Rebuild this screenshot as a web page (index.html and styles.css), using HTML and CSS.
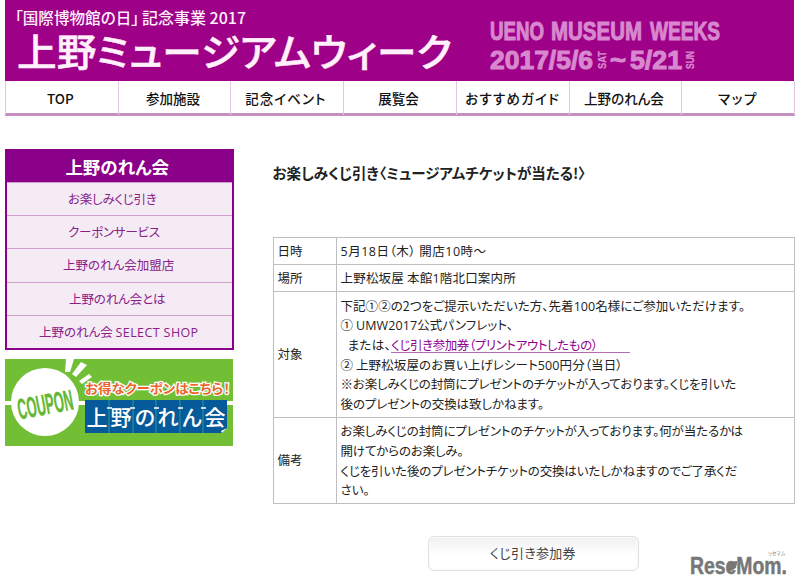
FILE: index.html
```html
<!DOCTYPE html>
<html lang="ja">
<head>
<meta charset="utf-8">
<title>上野ミュージアムウィーク</title>
<link rel="stylesheet" href="styles.css">
</head>
<body>
<header class="hero">
  <svg class="hero-art" viewBox="0 0 789 81" role="img" aria-label="上野ミュージアムウィーク">
    <g class="hero-title">
      <text class="tagline" x="10" y="23.5" textLength="124" lengthAdjust="spacingAndGlyphs">「国際博物館の日」</text>
      <text class="tagline" x="137" y="23.5" textLength="104" lengthAdjust="spacingAndGlyphs">記念事業 2017</text>
      <text class="name" x="12" y="66" textLength="435" lengthAdjust="spacingAndGlyphs">上野ミュージアムウィーク</text>
    </g>
    <g class="hero-en">
      <text x="485" y="40" textLength="54" lengthAdjust="spacingAndGlyphs">UENO</text>
      <text x="546" y="40" textLength="91" lengthAdjust="spacingAndGlyphs">MUSEUM</text>
      <text x="645" y="40" textLength="70" lengthAdjust="spacingAndGlyphs">WEEKS</text>
      <text x="485" y="68.500" textLength="103" lengthAdjust="spacingAndGlyphs">2017/5/6</text>
      <text class="day" transform="translate(601 69) rotate(-90)" textLength="18" lengthAdjust="spacingAndGlyphs">SAT</text>
      <text x="605" y="68.500" textLength="16" lengthAdjust="spacingAndGlyphs">~</text>
      <text x="625" y="68.500" textLength="52" lengthAdjust="spacingAndGlyphs">5/21</text>
      <text class="day" transform="translate(688.500 69) rotate(-90)" textLength="18" lengthAdjust="spacingAndGlyphs">SUN</text>
    </g>
  </svg>
</header>
<nav class="nav">
  <a>TOP</a><a>参加施設</a><a class="k1">記念イベント</a><a>展覧会</a><a class="k2">おすすめガイド</a><a>上野のれん会</a><a class="k3">マップ</a>
</nav>
<div class="columns">
  <aside class="side">
    <div class="menu">
      <h2>上野のれん会</h2>
      <a class="m1">お楽しみくじ引き</a>
      <a class="m2">クーポンサービス</a>
      <a class="m3">上野のれん会加盟店</a>
      <a class="m4">上野のれん会とは</a>
      <a class="m5">上野のれん会 <span class="latin">SELECT SHOP</span></a>
    </div>
    <svg class="banner" viewBox="0 0 228 87" role="img" aria-label="お得なクーポンはこちら！">
      <rect width="228" height="87" fill="#72bf35"/>
      <path d="M0 44H228" stroke="#fff" stroke-width="4"/>
      <circle cx="40" cy="43" r="34" fill="#fff"/>
      <path d="M61 0H69L65 13H60ZM76 3L82 6L71 18L67 15ZM84 15L87 18L77 25L74 22Z" fill="#fff"/>
      <text class="coupon" transform="translate(14.500 60.500) rotate(-10.500)" textLength="56" lengthAdjust="spacingAndGlyphs">COUPON</text>
      <text class="deal" x="80" y="34" textLength="145" lengthAdjust="spacingAndGlyphs">お得なクーポンはこちら！</text>
      <path d="M80 41H222V69L217 74H80Z" fill="#075a99"/>
      <path d="M104 41V74M128 41V74M151 41V74M175 41V74M198 41V74" stroke="#2b9a9b" stroke-width="1"/>
      <path d="M102 49h5M125 49h5M149 49h5M173 49h5M196 49h5" stroke="#fff" stroke-width="1.500"/>
      <g class="noren">
        <text x="92" y="66">上</text><text x="116" y="66">野</text><text x="140" y="66">の</text><text x="163" y="66">れ</text><text x="187" y="66">ん</text><text x="210" y="66">会</text>
      </g>
      <path d="M222 69L217 74L216 72Z" fill="#fff"/>
    </svg>
  </aside>
  <main class="main">
    <h1>お楽しみくじ引き〈ミュージアムチケットが当たる!〉</h1>
    <table>
      <tr class="short"><th>日時</th><td><p class="a1"><span class="latin">5</span>月<span class="latin">18</span>日（木） 開店<span class="latin">10</span>時～</p></td></tr>
      <tr class="short"><th>場所</th><td><p class="a2">上野松坂屋 本館<span class="latin">1</span>階北口案内所</p></td></tr>
      <tr class="target"><th>対象</th><td>
        <p class="b1">下記①②の2つをご提示いただいた方、先着<span class="latin">100</span>名様にご参加いただけます。</p>
        <p class="b2">① <span class="latin">UMW2017</span>公式パンフレット、</p>
        <p class="b3">または、<a class="ticket">くじ引き参加券（プリントアウトしたもの）</a></p>
        <p class="b4">② 上野松坂屋のお買い上げレシート<span class="latin">500</span>円分（当日）</p>
        <p class="b5">※お楽しみくじの封筒にプレゼントのチケットが入っております。くじを引いた</p>
        <p class="b6">後のプレゼントの交換は致しかねます。</p>
      </td></tr>
      <tr class="notes"><th>備考</th><td>
        <p class="c1">お楽しみくじの封筒にプレゼントのチケットが入っております。何が当たるかは</p>
        <p class="c2">開けてからのお楽しみ。</p>
        <p class="c3">くじを引いた後のプレゼントチケットの交換はいたしかねますのでご了承くだ</p>
        <p class="c4">さい。</p>
      </td></tr>
    </table>
    <div class="actions">
      <a class="button">くじ引き参加券</a>
      <svg class="brand" viewBox="0 0 102 34" role="img" aria-label="ReseMom">
        <text class="ruby" x="79" y="4.500" textLength="17">リセマム</text>
        <text class="word" x="1" y="24" textLength="97" lengthAdjust="spacingAndGlyphs">ReseMom.</text>
        <path d="M38 18Q38 11 48 11Q49 18 42 21Q38 21 38 18Z" fill="#777"/>
      </svg>
    </div>
  </main>
</div>
</body>
</html>
```
FILE: styles.css
```css
* { box-sizing: border-box; }
body {
  margin: 0;
  width: 800px;
  height: 588px;
  overflow: hidden;
  background: #fff;
  color: #222;
  font-family: "Noto Sans CJK JP", sans-serif;
  font-size: 12.5px;
  font-feature-settings: "palt";
}
h1, h2, p { margin: 0; }
svg { display: block; overflow: visible; }
.latin { font-family: "Open Sans", "Noto Sans CJK JP", sans-serif; }

.hero { margin-left: 5px; width: 789px; height: 81px; background: #9e0087; }
.hero-art { width: 789px; height: 81px; }
.hero-title { fill: #fff0fc; }
.tagline { font-size: 15.5px; font-weight: 500; }
.name { font-size: 38px; font-weight: 500; stroke: #fff0fc; stroke-width: .5; }
.hero-en { fill: #d788ce; font-family: "Liberation Sans", sans-serif; font-weight: 700; font-size: 25px; stroke: #d788ce; stroke-width: 1; }
.hero-en .day { font-size: 11px; stroke-width: .3; }

.nav {
  display: grid;
  grid-template-columns: repeat(7, 1fr);
  margin-left: 5px;
  width: 790px;
  height: 35px;
  border-left: 1px solid #e5c6e5;
  border-bottom: 3px solid #c68fc1;
}
.nav a {
  border-right: 1px solid #e5c6e5;
  color: #111;
  font-size: 13.5px;
  font-weight: 500;
  line-height: 34px;
  text-align: center;
  padding-right: 3px;
}
.nav .k1 { letter-spacing: 1px; }
.nav .k2 { letter-spacing: 1.200px; padding-right: 0; }
.nav .k3 { letter-spacing: 1.700px; padding-right: 0; }

.columns { display: flex; gap: 40px; padding: 33px 0 0 5px; }
.side { width: 228.500px; }
.menu { height: 201px; border: 2px solid #8a0089; background: #f4ebf5; }
.menu h2 {
  height: 31px;
  background: #8a0089;
  color: #fff;
  font-size: 17.5px;
  line-height: 31px;
  text-align: center;
  padding-right: 4px;
}
.menu a {
  display: block;
  height: 33.200px;
  border-top: 1px solid #cfa0cf;
  color: #8a2087;
  font-size: 12.5px;
  line-height: 32px;
  padding-left: 61px;
}
.menu .m1, .menu .m2 { letter-spacing: -.2px; }
.menu .m3 { padding-left: 56px; }
.menu .m4 { padding-left: 62px; letter-spacing: -.1px; }
.menu .m5 { padding-left: 32px; }
.m5 .latin { letter-spacing: .4px; }
.banner { width: 228px; height: 87px; margin-top: 9px; }
.coupon { fill: #65b733; font-family: "Liberation Sans Narrow", "Liberation Sans", sans-serif; font-size: 29px; font-weight: 700; stroke: #65b733; stroke-width: .4; }
.deal { fill: #ed642b; stroke: #fff; stroke-width: 2.5; paint-order: stroke; font-size: 13px; font-weight: 700; }
.noren { fill: #fff; font-size: 21px; font-weight: 500; text-anchor: middle; font-feature-settings: normal; }

.main { width: 522px; margin-left: -1px; }
h1 { height: 88px; padding-top: 13px; font-size: 14.5px; line-height: 22px; white-space: nowrap; }
table { width: 522px; border-collapse: collapse; table-layout: fixed; }
th, td { border: 1px solid #bfbfc3; padding: 0 0 0 4px; font-weight: 400; text-align: left; }
th { width: 63px; font-size: 12.5px; padding-bottom: 2px; }
.short { height: 27px; }
.target { height: 126px; }
.notes { height: 86px; }
td p { height: 19.600px; line-height: 19.600px; white-space: nowrap; }
.a1 { letter-spacing: .5px; }
.a2 { letter-spacing: .2px; }
.b1 { letter-spacing: .05px; }
.b2 { letter-spacing: .1px; }
.b3 { padding-left: 7px; letter-spacing: .4px; }
.b4 { letter-spacing: .1px; }
.b5, .c3 { letter-spacing: -.15px; }
.b6, .c1 { letter-spacing: -.09px; }
.c2 { letter-spacing: -.15px; }
.ticket { display: inline-block; width: 239px; height: 17px; line-height: 17px; border-bottom: 1px solid #b46ab4; color: #900090; letter-spacing: -.4px; }
.actions { display: flex; gap: 50px; padding: 32px 0 0 155px; }
.button {
  width: 211px;
  height: 35px;
  border: 1px solid #e0e0e0;
  border-radius: 6px;
  background: linear-gradient(#f0f0f0, #fff 55%);
  box-shadow: inset 0 0 0 1px #fafafa;
  color: #444;
  font-size: 13px;
  line-height: 32px;
  text-align: center;
  letter-spacing: .3px;
}
.brand { width: 102px; height: 34px; margin-top: 14px; flex: none; }
.word { fill: #777; font-family: "Liberation Sans Narrow", "Liberation Sans", sans-serif; font-size: 24px; font-weight: 700; stroke: #777; stroke-width: .5; }
.ruby { fill: #777; font-size: 4.5px; }
```
